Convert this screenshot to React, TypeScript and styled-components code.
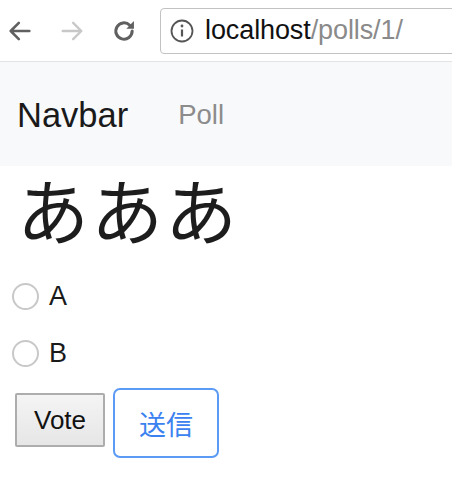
import React from "react";
import styled, { createGlobalStyle } from "styled-components";

const Global = createGlobalStyle`
  html, body { margin: 0; padding: 0; background: #fff; }
  body { font-family: "Liberation Sans", Arial, "Noto Sans CJK JP", sans-serif; color: #212529; overflow: hidden; }
`;

const Toolbar = styled.div`
  display: flex;
  align-items: center;
  height: 62px;
  box-sizing: border-box;
  border-bottom: 1px solid #e3e3e3;
  background: #fff;
  overflow: hidden;
  padding-left: 6px;
`;

const NavButton = styled.span<{ $faded?: boolean }>`
  display: flex;
  align-items: center;
  justify-content: center;
  width: 28px;
  height: 28px;
  margin-right: 24px;
  color: ${(p) => (p.$faded ? "#c8c8c8" : "#606060")};
`;

const AddressBox = styled.div`
  flex: none;
  display: flex;
  align-items: center;
  width: 330px;
  height: 46px;
  box-sizing: border-box;
  margin-left: -2px;
  border: 1px solid #c2c2c2;
  border-radius: 4px;
  padding-left: 9px;
  gap: 11px;
  font-size: 27px;
  letter-spacing: -0.1px;
`;

const Host = styled.span`
  color: #111;
`;

const Path = styled.span`
  color: #8a8a8a;
`;

const Navbar = styled.nav`
  display: flex;
  align-items: center;
  height: 104px;
  background: #f8f9fa;
  padding: 0 0 0 17px;
  gap: 50px;
`;

const Brand = styled.span`
  font-size: 34.5px;
  color: #1a1a1a;
  margin-top: 2px;
`;

const NavLink = styled.span`
  font-size: 27.5px;
  color: #8c8c8c;
  margin-top: 2px;
`;

const Main = styled.main`
  display: flex;
  flex-direction: column;
  align-items: flex-start;
`;

const Title = styled.h1`
  margin: -6px 0 12px 17px;
  font-family: "Noto Sans CJK JP", sans-serif;
  font-weight: 400;
  font-size: 72px;
  line-height: 96px;
  color: #1d1d1d;
  letter-spacing: 2px;
`;

const Choice = styled.label`
  display: flex;
  align-items: center;
  height: 57px;
  font-size: 27px;
  color: #1a1a1a;
  gap: 10px;
  padding-left: 12px;
`;

const Radio = styled.span`
  width: 27px;
  height: 27px;
  border-radius: 50%;
  border: 2px solid #c8c8c8;
  box-sizing: border-box;
  background: #fff;
`;

const Buttons = styled.div`
  display: flex;
  align-items: center;
  gap: 8px;
  padding-left: 14px;
  margin-top: 6px;
`;

const VoteButton = styled.button`
  width: 90px;
  height: 54px;
  margin-left: 1px;
  margin-bottom: 6px;
  font-family: "Liberation Sans", Arial, sans-serif;
  font-size: 26px;
  color: #111;
  background: linear-gradient(#f4f4f4, #e6e6e6);
  border: 2px solid #adadad;
  border-radius: 2px;
  padding: 0;
`;

const SendButton = styled.button`
  width: 106px;
  height: 70px;
  font-family: "Noto Sans CJK JP", sans-serif;
  font-size: 27px;
  color: #3b82f0;
  background: #fff;
  border: 2px solid #5b9bf5;
  border-radius: 7px;
  padding: 0;
`;

const BackIcon = () => (
  <svg width="28" height="28" viewBox="0 0 24 24" fill="none" stroke="currentColor" strokeWidth="2.2" strokeLinecap="round" strokeLinejoin="round">
    <path d="M20 12H4M11 5l-7 7 7 7" />
  </svg>
);

const ForwardIcon = () => (
  <svg width="28" height="28" viewBox="0 0 24 24" fill="none" stroke="currentColor" strokeWidth="2" strokeLinecap="round" strokeLinejoin="round">
    <path d="M4 12h16M13 5l7 7-7 7" />
  </svg>
);

const ReloadIcon = () => (
  <svg width="30" height="30" viewBox="0 0 24 24" fill="none">
    <path d="M19 12a7 7 0 1 1-2.05-4.95" stroke="currentColor" strokeWidth="2.6" strokeLinecap="round" />
    <path d="M20.5 3.5v6.5h-6.5z" fill="currentColor" />
  </svg>
);

const InfoIcon = () => (
  <svg width="24" height="24" viewBox="0 0 24 24" fill="none" stroke="#555" strokeWidth="1.8">
    <circle cx="12" cy="12" r="10.5" />
    <path d="M12 10.5v7" strokeWidth="2.2" />
    <circle cx="12" cy="7" r="0.6" fill="#555" strokeWidth="1.6" />
  </svg>
);

export default function App() {
  return (
    <>
      <Global />
      <Toolbar>
        <NavButton><BackIcon /></NavButton>
        <NavButton $faded><ForwardIcon /></NavButton>
        <NavButton><ReloadIcon /></NavButton>
        <AddressBox>
          <InfoIcon />
          <span>
            <Host>localhost</Host>
            <Path>/polls/1/</Path>
          </span>
        </AddressBox>
      </Toolbar>
      <Navbar>
        <Brand>Navbar</Brand>
        <NavLink>Poll</NavLink>
      </Navbar>
      <Main>
        <Title>あああ</Title>
        <Choice><Radio />A</Choice>
        <Choice><Radio />B</Choice>
        <Buttons>
          <VoteButton>Vote</VoteButton>
          <SendButton>送信</SendButton>
        </Buttons>
      </Main>
    </>
  );
}
